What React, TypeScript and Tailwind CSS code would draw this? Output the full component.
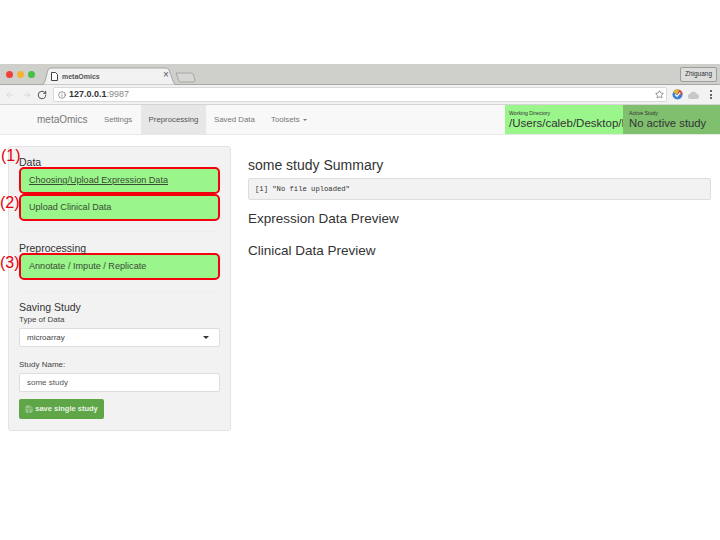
import { ArrowLeft, ArrowRight, Info, RotateCw, Save, Star } from 'lucide-react';

function ActionButton({ label, underline }: { label: string; underline?: boolean }) {
  return (
    <div
      className={`h-[27px] rounded-[5px] border-[2px] border-[#f5000f] bg-[#9af58a] pl-[8px] pt-[1px] flex items-center text-[9.1px] text-[#3a4a36] ${
        underline ? 'underline' : ''
      }`}
    >
      {label}
    </div>
  );
}

function BrowserChrome() {
  return (
    <div>
      {/* tab strip */}
      <div className="relative h-[21px] bg-[#cfcfcc] border-b border-[#a9a9a9] flex items-center justify-between pl-[6px] pr-[3px]">
        <div className="flex gap-[4px]">
          <span className="w-[7px] h-[7px] rounded-full bg-[#f0413c]" />
          <span className="w-[7px] h-[7px] rounded-full bg-[#f5b32f]" />
          <span className="w-[7px] h-[7px] rounded-full bg-[#48c043]" />
        </div>
        <svg className="absolute left-[40px] top-[3px]" width="156" height="18" viewBox="0 0 156 18">
          <path d="M136 6 H151 Q153 6 153.500 8 L155 13 Q155.500 15 153 15 L140 15 Q139 15 138.500 13 Z" fill="#d6d6d3" stroke="#a6a6a6" />
          <path d="M0 18 L1 18 Q4 18 5 14 L8 3 Q9 1 11 1 L126 1 Q128 1 129 3 L133 14 Q134 18 137 18 L138 18 Z" fill="#f2f2f2" stroke="#a6a6a6" />
        </svg>
        <div className="absolute left-[51px] top-[8px] flex items-center gap-[4px]">
          <svg width="7" height="9" viewBox="0 0 7 9">
            <path d="M0.5 0.5 H4.5 L6.5 2.5 V8.5 H0.5 Z" fill="#fff" stroke="#444" />
          </svg>
          <span className="text-[7px] font-bold leading-[9px] text-[#555]">metaOmics</span>
        </div>
        <span className="absolute left-[163px] top-[6px] text-[10px] leading-[10px] text-[#555]">×</span>
        <div className="h-[15px] w-[37px] rounded-[2px] border border-[#9d9d9d] bg-[#dcdcda] flex items-center justify-center text-[6.5px] text-[#333]">
          Zhiguang
        </div>
      </div>
      {/* toolbar */}
      <div className="h-[20px] bg-[#f2f2f2] border-b border-[#d4d4d4] flex items-center pl-[5px] pr-[8px]">
        <ArrowLeft size={10} strokeWidth={1.5} className="text-[#cdcdcd] mr-[7px]" />
        <ArrowRight size={10} strokeWidth={1.5} className="text-[#cdcdcd] mr-[4px]" />
        <RotateCw size={10} strokeWidth={2.2} className="text-[#444] mr-[6px] ml-[1px]" />
        <div className="h-[15px] w-[616px] bg-white border border-[#dadada] rounded-[2px] flex items-center pl-[4px] pr-[2px]">
          <Info size={8} strokeWidth={1.6} className="text-[#444] mr-[3px]" />
          <span className="text-[9px] text-[#333] font-bold">127.0.0.1</span>
          <span className="text-[9px] text-[#888]">:9987</span>
          <Star size={9} strokeWidth={1.5} className="ml-auto text-[#444]" />
        </div>
        <svg width="11" height="11" viewBox="0 0 12 12" className="ml-[5px]">
          <circle cx="6" cy="6" r="5.5" fill="#3d7fd6" />
          <path d="M1 3.6 A5.5 5.5 0 0 1 8 0.9 L6 6 Z" fill="#e0b52f" />
          <path d="M8 0.9 A5.5 5.5 0 0 1 11.5 6 L6 6 Z" fill="#d84a3c" />
          <path d="M3.5 6 L5.5 8 L9 4" fill="none" stroke="#fff" strokeWidth="1.4" />
        </svg>
        <svg width="11" height="8" viewBox="0 0 11 8" className="ml-[5px]">
          <path d="M2.5 8 A2.5 2.5 0 0 1 2 3 A3.5 3.5 0 0 1 8.5 2.5 A2.8 2.8 0 0 1 9 8 Z" fill="#c8c8c8" />
        </svg>
        <div className="ml-[11px] flex flex-col gap-[1.5px]">
          <span className="w-[2px] h-[2px] bg-[#666]" />
          <span className="w-[2px] h-[2px] bg-[#666]" />
          <span className="w-[2px] h-[2px] bg-[#666]" />
        </div>
      </div>
    </div>
  );
}

function Navbar() {
  return (
    <div className="h-[30px] bg-[#f8f8f8] border-b border-[#e7e7e7] flex text-[#777] text-[7.8px] leading-[29px]">
      <div className="ml-[37px] w-[67px] text-[10px]">metaOmics</div>
      <div className="w-[37px]">Settings</div>
      <div className="bg-[#e7e7e7] w-[65px] text-center text-[#555] h-[29px]">Preprocessing</div>
      <div className="ml-[8px] w-[57px]">Saved Data</div>
      <div className="flex items-center gap-[3px]">
        Toolsets
        <span className="w-0 h-0 border-x-[2px] border-x-transparent border-t-[2px] border-t-[#777]" />
      </div>
      <div className="ml-auto flex h-[29px]">
        <div className="w-[118px] bg-[#9af58a] pl-[4px] pt-[5px] overflow-hidden text-[#333] whitespace-nowrap">
          <div className="text-[5.2px] leading-[7px]">Working Directory</div>
          <div className="text-[11.5px] leading-[13px]">/Users/caleb/Desktop/MetaOmics</div>
        </div>
        <div className="w-[97px] bg-[#7fbf6e] pl-[6px] pt-[5px] text-[#333] whitespace-nowrap">
          <div className="text-[5.2px] leading-[7px]">Active Study</div>
          <div className="text-[11.3px] leading-[13px]">No active study</div>
        </div>
      </div>
    </div>
  );
}

function Sidebar() {
  return (
    <div className="relative w-[223px] h-[285px] bg-[#f2f2f2] border border-[#e3e3e3] rounded-[3px] px-[10px] pt-[10px] shrink-0">
      <span className="absolute left-[-8px] top-[0px] text-[16px] leading-[17px] text-[#e3000f]">(1)</span>
      <span className="absolute left-[-9px] top-[47px] text-[16px] leading-[17px] text-[#e3000f]">(2)</span>
      <span className="absolute left-[-9px] top-[107px] text-[16px] leading-[17px] text-[#e3000f]">(3)</span>

      <div className="text-[10.5px] leading-[10px] text-[#333]">Data</div>
      <ActionButton label="Choosing/Upload Expression Data" underline />
      <ActionButton label="Upload Clinical Data" />
      <div className="border-t border-[#eeeeee] mt-[10px]" />
      <div className="text-[10.5px] leading-[10px] text-[#333] mt-[11px]">Preprocessing</div>
      <ActionButton label="Annotate / Impute / Replicate" />
      <div className="border-t border-[#eeeeee] mt-[12px]" />

      <div className="text-[10.5px] leading-[13px] text-[#333] mt-[8px]">Saving Study</div>
      <div className="text-[8px] leading-[12px] text-[#444]">Type of Data</div>
      <div className="mt-[2px] h-[19px] bg-white border border-[#dddddd] rounded-[2px] flex items-center justify-between pl-[7px] pr-[10px] text-[8px] text-[#444]">
        microarray
        <span className="w-0 h-0 border-x-[3px] border-x-transparent border-t-[3px] border-t-[#333]" />
      </div>
      <div className="text-[8px] leading-[12px] text-[#444] mt-[12px]">Study Name:</div>
      <div className="mt-[2px] h-[19px] bg-white border border-[#dddddd] rounded-[2px] flex items-center pl-[7px] text-[8px] text-[#555]">
        some study
      </div>
      <div className="mt-[7px] w-[85px] h-[20px] bg-[#5fa648] rounded-[2px] flex items-center justify-center gap-[2px] text-[7.5px] font-bold text-[#e8f3e4]">
        <Save size={8} strokeWidth={1.5} />
        save single study
      </div>
    </div>
  );
}

export default function App() {
  return (
    <div className="w-[720px] h-[540px] bg-white overflow-hidden pt-[64px] font-['Liberation_Sans',sans-serif]">
      <BrowserChrome />
      <Navbar />
      <div className="flex pl-[8px] pr-[9px] pt-[11px]">
        <Sidebar />
        <div className="ml-[17px] flex-1">
          <div className="text-[14px] leading-[17px] text-[#333] mt-[11px]">some study Summary</div>
          <div className="mt-[4px] h-[22px] bg-[#f2f2f2] border border-[#dddddd] rounded-[2px] pl-[6px] font-['Liberation_Mono',monospace] text-[7.2px] leading-[20px] text-[#333]">
            [1] "No file uploaded"
          </div>
          <div className="text-[13.5px] leading-[17px] text-[#333] mt-[10px]">Expression Data Preview</div>
          <div className="text-[13.5px] leading-[17px] text-[#333] mt-[15px]">Clinical Data Preview</div>
        </div>
      </div>
    </div>
  );
}
